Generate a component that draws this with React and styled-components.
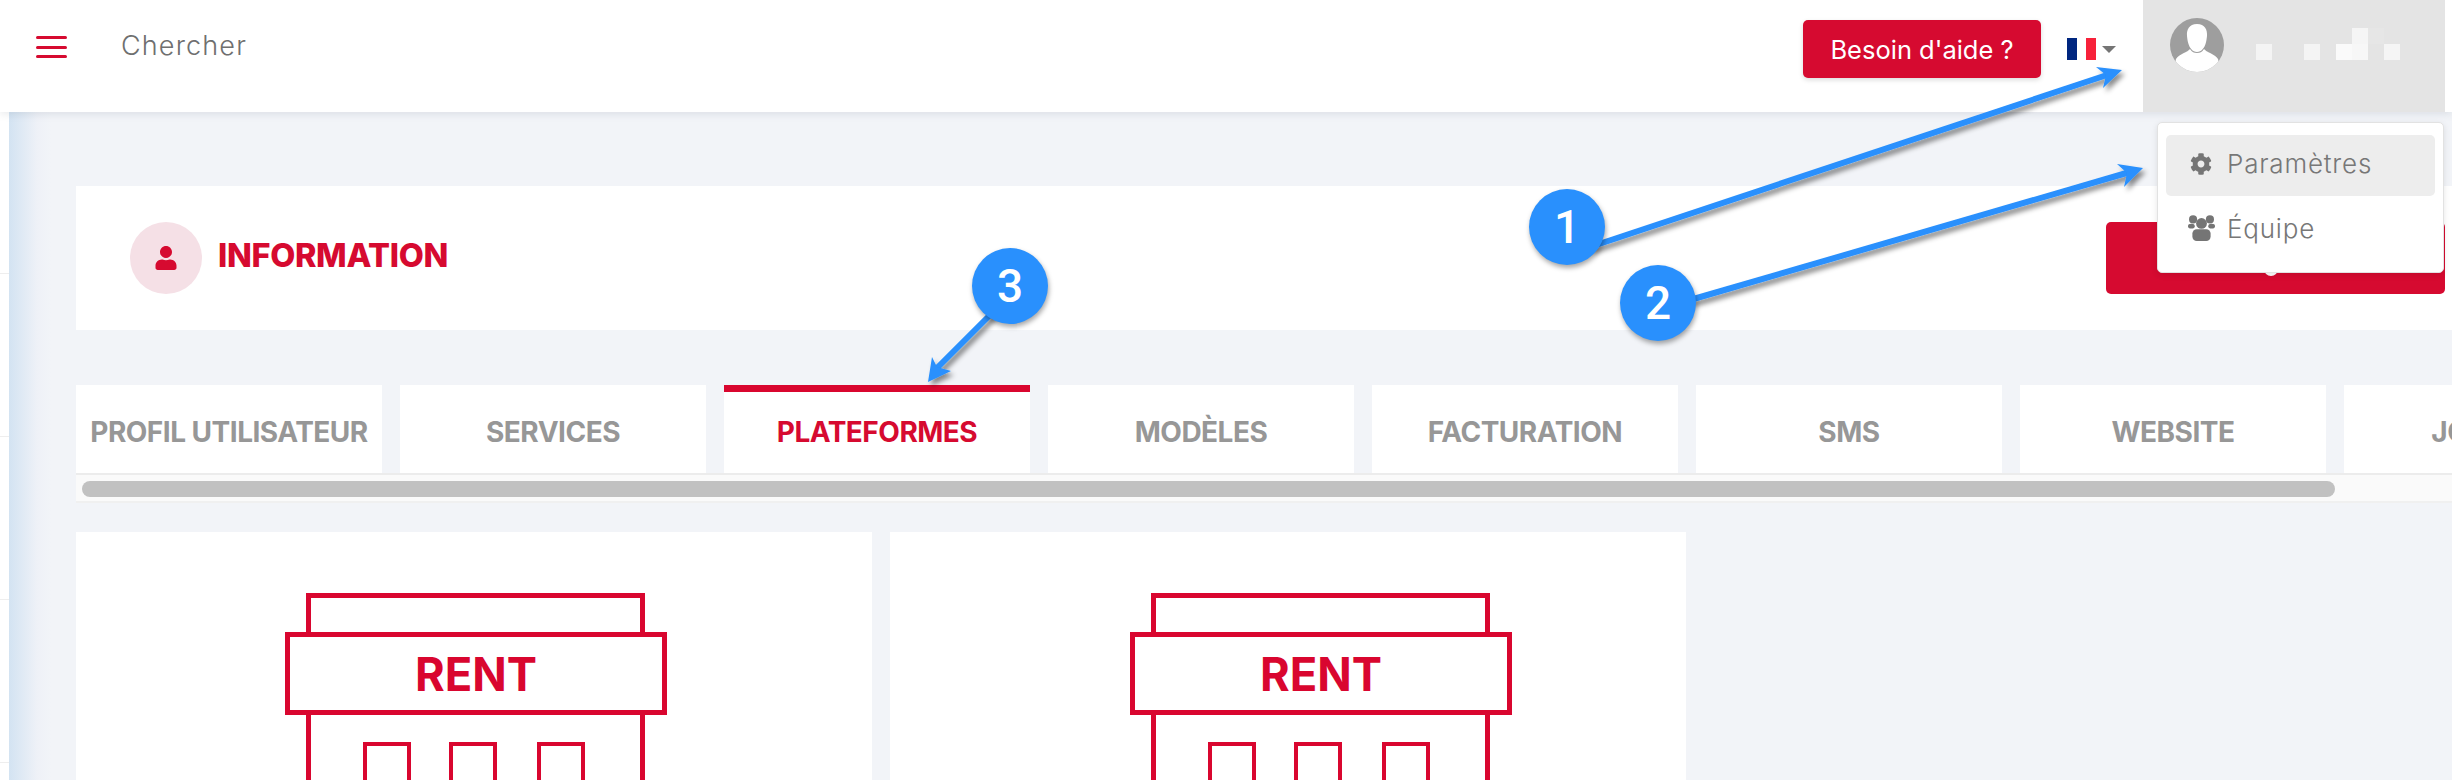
import React from "react";
import styled, { createGlobalStyle } from "styled-components";
import { FaCog, FaUser } from "react-icons/fa";

const RED = "#d60a30";
const FONT = `Inter, "Open Sans", "Liberation Sans", sans-serif`;

const Global = createGlobalStyle`
  html, body { margin: 0; padding: 0; height: 780px; overflow: hidden; background: #f2f4f8; }
  #root { height: 780px; }
  * { box-sizing: border-box; }
  body { font-family: ${FONT}; }
`;

const Page = styled.div`
  position: relative;
  width: 2452px;
  height: 780px;
  display: flex;
  flex-direction: column;
  overflow: hidden;
`;
const Header = styled.header`
  position: relative;
  z-index: 2;
  flex: 0 0 112px;
  display: flex;
  align-items: flex-start;
  padding-right: 7px;
  background: #fff;
  box-shadow: 0 2px 8px rgba(60, 70, 90, 0.12);
`;
const Burger = styled.div`
  width: 31px;
  margin: 36px 0 0 36px;
  display: flex;
  flex-direction: column;
  gap: 6.5px;
`;
const BurgerBar = styled.span`
  display: block;
  height: 3px;
  border-radius: 2px;
  background: ${RED};
`;
const Search = styled.div`
  margin: 30px 0 0 54px;
  font-size: 27px;
  line-height: 32px;
  letter-spacing: 1.15px;
  font-weight: 300;
  color: #6f6f6f;
`;
const HelpButton = styled.button`
  margin: 20px 0 0 auto;
  width: 238px;
  height: 58px;
  border: 0;
  border-radius: 5px;
  background: ${RED};
  color: #fff;
  font: 400 25.5px ${FONT};
  box-shadow: 0 2px 5px rgba(0, 0, 0, 0.14);
`;
const Lang = styled.div`
  display: flex;
  align-items: center;
  margin: 38px 27px 0 26px;
  gap: 6px;
`;
const Flag = styled.svg`
  display: block;
  width: 29px;
  height: 22px;
`;
const Caret = styled.span`
  width: 0;
  height: 0;
  border-left: 7px solid transparent;
  border-right: 7px solid transparent;
  border-top: 7px solid #757575;
`;
const UserBlock = styled.div`
  position: relative;
  width: 302px;
  height: 112px;
  display: flex;
  align-items: flex-start;
  padding: 18px 0 0 27px;
  background: #e4e4e4;
`;
const Avatar = styled.svg`
  width: 54px;
  height: 54px;
  flex: none;
`;
const BlurName = styled.svg`
  width: 144px;
  height: 32px;
  margin: 10px 0 0 32px;
`;
const Dropdown = styled.div`
  position: absolute;
  top: 122px;
  left: 14px;
  width: 287px;
  height: 151px;
  padding: 12px 8px;
  background: #fff;
  border: 1px solid #e2e2e2;
  border-radius: 5px;
  box-shadow: 0 2px 6px rgba(0, 0, 0, 0.1);
`;
const MenuItem = styled.div`
  height: 61px;
  display: flex;
  align-items: center;
  padding: ${(p) => p.$drop}px 0 ${(p) => p.$lift}px 19px;
  border-radius: 5px;
  background: ${(p) => (p.$active ? "#ededed" : "transparent")};
  color: #777;
  font-size: 26px;
  font-weight: 300;
  letter-spacing: 0.8px;
`;
const MenuIcon = styled.span`
  width: 32px;
  margin-right: 10px;
  display: flex;
  justify-content: center;
  font-size: ${(p) => p.$size}px;
  color: #757575;
`;
const TeamIcon = styled.svg`
  display: block;
  width: 27px;
  height: 26px;
`;

const Body = styled.div`
  flex: 1;
  min-height: 0;
  display: flex;
`;
const Sidebar = styled.aside`
  flex: 0 0 9px;
  background: #fff;
`;
const SideItem = styled.div`
  height: 163px;
  border-bottom: 1px solid #eee;
  margin-top: ${(p) => (p.$first ? "-1px" : "0")};
`;
const Content = styled.main`
  flex: 1;
  min-width: 0;
  padding: 74px 0 0 67px;
  display: flex;
  flex-direction: column;
  background: linear-gradient(90deg, #d3e3f2 0, #eef1f7 28px, #f2f4f8 42px);
`;
const InfoCard = styled.section`
  flex: 0 0 144px;
  display: flex;
  align-items: center;
  padding: 0 7px 0 54px;
  background: #fff;
`;
const InfoBadge = styled.div`
  width: 72px;
  height: 72px;
  border-radius: 50%;
  display: flex;
  align-items: center;
  justify-content: center;
  background: #f5e0e6;
  color: ${RED};
  font-size: 24px;
`;
const InfoTitle = styled.h1`
  margin: -6px 0 0 16px;
  font-size: 32.5px;
  font-weight: 800;
  letter-spacing: -0.35px;
  color: ${RED};
`;
const SaveButton = styled.button`
  margin-left: auto;
  width: 339px;
  height: 72px;
  border: 0;
  border-radius: 5px;
  background: ${RED};
  display: flex;
  justify-content: center;
  padding: 0 10px 0 0;
`;
const SaveDot = styled.span`
  width: 14px;
  height: 14px;
  margin-top: 40px;
  border-radius: 50%;
  background: #fff;
`;
const TabBar = styled.nav`
  margin-top: 55px;
  flex: 0 0 88px;
  display: flex;
  gap: 18px;
  overflow: hidden;
`;
const Tab = styled.div`
  flex: 0 0 306px;
  height: 88px;
  display: flex;
  align-items: center;
  justify-content: center;
  background: #fff;
  border-top: 7px solid ${(p) => (p.$active ? "#d9062f" : "#fff")};
  padding-bottom: 1px;
  font-size: 28px;
  font-weight: 700;
  letter-spacing: -0.5px;
  white-space: nowrap;
  color: ${(p) => (p.$active ? RED : "#979797")};
`;
const ScrollTrack = styled.div`
  flex: 0 0 30px;
  padding: 6px 0 0 6px;
  background: #fafafa;
  border-top: 2px solid #ececec;
  border-bottom: 2px solid #f0f0f0;
`;
const ScrollThumb = styled.div`
  width: 2253px;
  height: 16px;
  border-radius: 8px;
  background: #c1c1c1;
`;
const Cards = styled.div`
  margin-top: 29px;
  flex: 1;
  display: flex;
  gap: 18px;
`;
const Card = styled.article`
  flex: 0 0 796px;
  padding: 61px 0 0 ${(p) => p.$shift}px;
  background: #fff;
`;
const Building = styled.svg`
  display: block;
  width: 382px;
  height: 200px;
`;

const Annotations = styled.svg`
  position: absolute;
  inset: 0;
  z-index: 5;
  width: 2452px;
  height: 780px;
  pointer-events: none;
  overflow: visible;
`;
const Bubble = styled.div`
  position: absolute;
  z-index: 6;
  left: ${(p) => p.$x - 38}px;
  top: ${(p) => p.$y - 38}px;
  width: 76px;
  height: 76px;
  border-radius: 50%;
  display: flex;
  align-items: center;
  justify-content: center;
  background: #2990fd;
  color: #fff;
  font: 500 46px Roboto, sans-serif;
  box-shadow: 1px 3px 5px rgba(0, 0, 0, 0.35);
`;

const tabs = [
  { label: "PROFIL UTILISATEUR" },
  { label: "SERVICES" },
  { label: "PLATEFORMES", active: true },
  { label: "MODÈLES" },
  { label: "FACTURATION" },
  { label: "SMS" },
  { label: "WEBSITE" },
  { label: "JOURNAL" },
];

const arrows = [
  { line: [1590, 247, 2110, 74], head: "2122,70 2096,67 2106,75 2103,88" },
  { line: [1690, 300, 2130, 172], head: "2143,168 2117,164 2127,173 2124,187" },
  { line: [1000, 305, 937, 368], head: "928,382 932,357 937,367 951,371" },
];

function BuildingIcon() {
  return (
    <Building viewBox="0 0 382 200">
      <g fill="none" stroke="#d9062f" strokeWidth="5">
        <path d="M23.5 39V2.5H357.5V39" />
        <rect x="2.5" y="41.5" width="377" height="78" />
        <path d="M23.5 122V200M357.5 122V200" />
        <path strokeWidth="4" d="M80 200V151H124V200M166 200V151H210V200M254 200V151H298V200" />
      </g>
      <text x="191" y="98" textAnchor="middle" textLength="122" lengthAdjust="spacingAndGlyphs"
        fill="#d9062f" fontFamily="Inter, sans-serif" fontWeight="700" fontSize="46">RENT</text>
    </Building>
  );
}

export default function App() {
  return (
    <Page>
      <Global />
      <Header>
        <Burger>
          <BurgerBar />
          <BurgerBar />
          <BurgerBar />
        </Burger>
        <Search>Chercher</Search>
        <HelpButton>Besoin d'aide ?</HelpButton>
        <Lang>
          <Flag viewBox="0 0 29 22">
            <rect width="10" height="22" fill="#00267f" />
            <rect x="10" width="9" height="22" fill="#fff" />
            <rect x="19" width="10" height="22" fill="#f7213a" />
          </Flag>
          <Caret />
        </Lang>
        <UserBlock>
          <Avatar viewBox="0 0 54 54">
            <defs>
              <clipPath id="avatarClip"><circle cx="27" cy="27" r="27" /></clipPath>
            </defs>
            <circle cx="27" cy="27" r="27" fill="#9e9e9e" />
            <g clipPath="url(#avatarClip)" fill="#fff">
              <path d="M27 6c-8 0-10.500 6-10 12 .3 3 .6 5 1.500 8 1 3.500 4 8 8.500 8s7.500-4.500 8.500-8c.9-3 1.200-5 1.500-8 .5-6-2-12-10-12z" />
              <path d="M20 31c-2 3-11 5-14 10-1 2-1 13 0 13h42c1 0 1-11 0-13-3-5-12-7-14-10-2 3-4 4-7 4s-5-1-7-4z" />
            </g>
          </Avatar>
          <BlurName viewBox="0 0 144 32">
            <rect x="112" y="0" width="16" height="16" fill="#e6e6e6" />
            <rect x="0" y="16" width="16" height="16" fill="#f4f4f4" />
            <rect x="48" y="16" width="16" height="16" fill="#f4f4f4" />
            <rect x="80" y="16" width="16" height="16" fill="#fafafa" />
            <rect x="96" y="16" width="16" height="16" fill="#f7f7f7" />
            <rect x="96" y="0" width="16" height="16" fill="#f5f5f5" />
            <rect x="128" y="16" width="16" height="16" fill="#f5f5f5" />
          </BlurName>
          <Dropdown>
            <MenuItem $active $drop={0} $lift={4}>
              <MenuIcon $size={22}><FaCog /></MenuIcon>
              Paramètres
            </MenuItem>
            <MenuItem $drop={3} $lift={0}>
              <MenuIcon>
                <TeamIcon viewBox="0 0 80 77">
                  <g fill="#757575">
                    <circle cx="40" cy="25" r="16" />
                    <rect x="13" y="42" width="54" height="35" rx="13" />
                    <circle cx="15" cy="13" r="12" />
                    <circle cx="65" cy="13" r="12" />
                    <ellipse cx="10" cy="33" rx="10" ry="7" />
                    <ellipse cx="70" cy="33" rx="10" ry="7" />
                  </g>
                </TeamIcon>
              </MenuIcon>
              Équipe
            </MenuItem>
          </Dropdown>
        </UserBlock>
      </Header>
      <Body>
        <Sidebar>
          <SideItem $first />
          <SideItem />
          <SideItem />
          <SideItem />
        </Sidebar>
        <Content>
          <InfoCard>
            <InfoBadge><FaUser /></InfoBadge>
            <InfoTitle>INFORMATION</InfoTitle>
            <SaveButton><SaveDot /></SaveButton>
          </InfoCard>
          <TabBar>
            {tabs.map((t) => (
              <Tab key={t.label} $active={t.active}>{t.label}</Tab>
            ))}
          </TabBar>
          <ScrollTrack><ScrollThumb /></ScrollTrack>
          <Cards>
            <Card $shift={209}><BuildingIcon /></Card>
            <Card $shift={240}><BuildingIcon /></Card>
          </Cards>
        </Content>
      </Body>
      <Annotations viewBox="0 0 2452 780">
        <defs>
          <filter id="arrowShadow" x="-10%" y="-30%" width="120%" height="160%">
            <feDropShadow dx="3" dy="4" stdDeviation="2.500" floodColor="#000" floodOpacity="0.45" />
          </filter>
        </defs>
        <g filter="url(#arrowShadow)">
          {arrows.map((a) => (
            <g key={a.head}>
              <line x1={a.line[0]} y1={a.line[1]} x2={a.line[2]} y2={a.line[3]} stroke="#2990fd" strokeWidth="6" />
              <polygon points={a.head} fill="#2990fd" />
            </g>
          ))}
        </g>
      </Annotations>
      <Bubble $x={1567} $y={227}>1</Bubble>
      <Bubble $x={1658} $y={303}>2</Bubble>
      <Bubble $x={1010} $y={286}>3</Bubble>
    </Page>
  );
}
